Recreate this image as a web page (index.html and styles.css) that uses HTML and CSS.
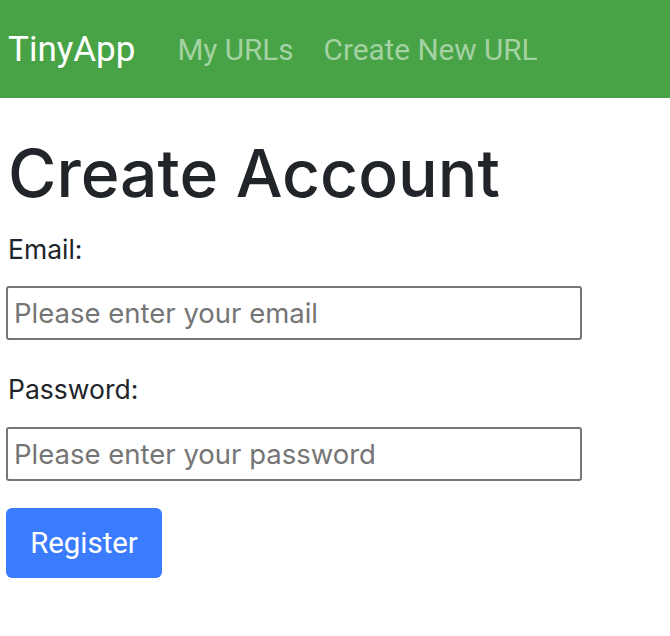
FILE: index.html
```html
<!DOCTYPE html>
<html>
<head>
<meta charset="utf-8">
<link rel="stylesheet" href="styles.css">
</head>
<body>
<nav class="navbar">
  <a class="brand" href="#">TinyApp</a>
  <a class="nav-link" href="#">My URLs</a>
  <a class="nav-link" href="#">Create New URL</a>
</nav>
<main class="content">
  <h1 class="title">Create Account</h1>
  <form class="form">
    <label class="label" for="email">Email:</label>
    <input class="field" id="email" type="text" placeholder="Please enter your email">
    <label class="label" for="password">Password:</label>
    <input class="field" id="password" type="password" placeholder="Please enter your password">
    <button class="btn" type="button">Register</button>
  </form>
</main>
</body>
</html>
```
FILE: styles.css
```css
* { box-sizing: border-box; }
body {
  margin: 0;
  font-family: Inter, "Liberation Sans", sans-serif;
  color: #212529;
  background: #fff;
}
.navbar {
  height: 98px;
  background: #48a346;
  display: flex;
  align-items: center;
  padding: 0 8px;
}
.brand {
  font-family: Roboto, sans-serif;
  font-size: 35px;
  color: #fff;
  text-decoration: none;
  margin-right: 42px;
}
.nav-link {
  font-family: Roboto, sans-serif;
  font-size: 29.7px;
  color: #a4d2a3;
  text-decoration: none;
  margin-right: 30px;
}
.content {
  padding: 0 8px;
}
.title {
  font-size: 66px;
  font-weight: 500;
  margin: 36px 0 21px;
  line-height: 1.2;
}
.form {
  display: flex;
  flex-direction: column;
  align-items: flex-start;
}
.label {
  font-size: 26.5px;
  line-height: 1.2;
  margin-bottom: 20px;
}
.field {
  width: 576px;
  height: 54px;
  margin-left: -2px;
  border: 2px solid #767676;
  border-radius: 3px;
  font-family: Inter, sans-serif;
  font-size: 27.5px;
  padding: 0 6px;
  margin-bottom: 34px;
}
.field + .label + .field { margin-bottom: 32px; }
.field + .label { margin-bottom: 21px; }
.field::placeholder { color: #757575; }
.btn {
  margin-left: -2px;
  margin-top: -5px;
  width: 156px;
  height: 70px;
  background: #3a7cfd;
  color: #fff;
  border: none;
  border-radius: 6px;
  font-family: Roboto, sans-serif;
  font-size: 29.4px;
}
```
